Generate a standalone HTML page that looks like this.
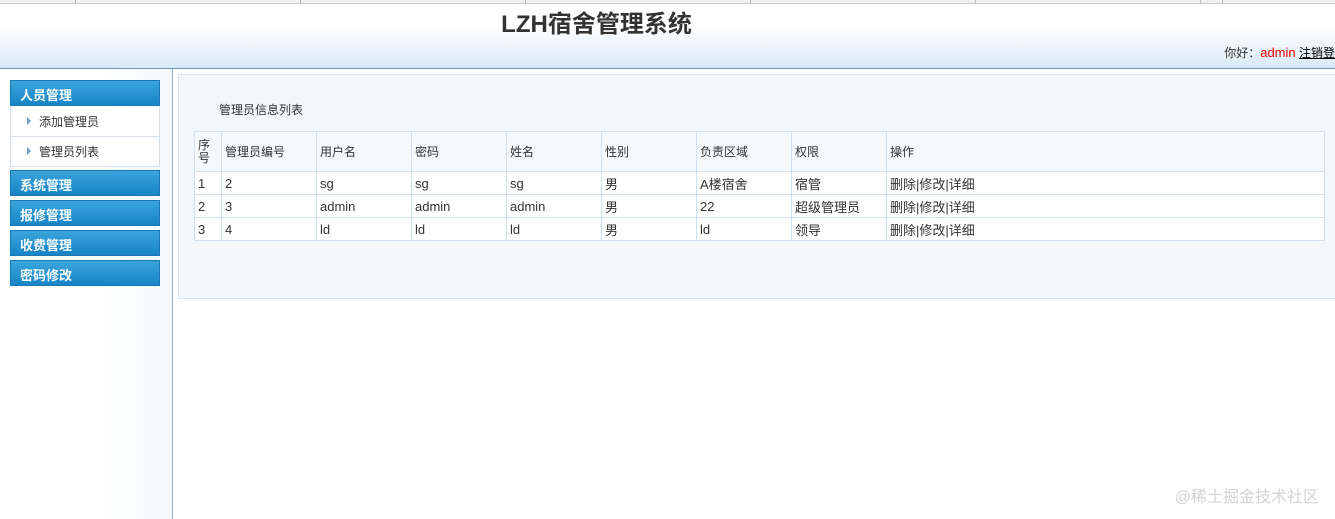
<!DOCTYPE html><html><head><meta charset="utf-8"><style>
*{margin:0;padding:0;box-sizing:border-box}
body{width:1335px;height:519px;overflow:hidden;background:#fff;font-family:"Liberation Sans","Noto Sans CJK SC",sans-serif;font-size:12px;color:#333;position:relative}
.tabs{position:absolute;top:0;left:0;width:1335px;height:4px;background:#f0f0f0;border-bottom:1px solid #ccc}
.tabs i{position:absolute;top:0;width:1px;height:4px;background:#bbb}
.head{position:absolute;top:4px;left:0;width:1335px;height:65px;background:linear-gradient(#fff 0%,#fff 35%,#d9eaf7 100%);border-bottom:1px solid #6d98b8}
.title{position:absolute;left:0;width:1193px;text-align:center;top:0px;font-size:24px;font-weight:bold;color:#333}
.hi{position:absolute;right:0;top:40px;font-size:12px;color:#333}
.hi span{color:#e00;font-size:13px}.hi u{color:#000}
.side{position:absolute;top:69px;left:0;width:173px;height:450px;border-right:1px solid #8fb5d3;background:linear-gradient(90deg,#fff 60%,#f3f8fd)}
.mh{position:absolute;left:10px;width:150px;height:26px;background:linear-gradient(#3aa5dc,#1784c6);border:1px solid #1a78b5;color:#fff;font-weight:bold;font-size:13px;padding:8px 0 0 9px;line-height:14px}
.mi{position:absolute;left:10px;width:150px;height:30px;border:1px solid #d4dfe8;border-top:none;background:#fff;padding:6px 0 0 28px;font-size:12px;color:#333}
.mi:before{content:"";position:absolute;left:16px;top:10px;border-left:4px solid #6aa0c8;border-top:4px solid transparent;border-bottom:4px solid transparent}
.panel{position:absolute;left:178px;top:74px;width:1160px;height:225px;background:#f2f7fc;border:1px solid #d8e6f2}
.cap{position:absolute;left:219px;top:101px;font-size:12px}
table{position:absolute;left:194px;top:131px;border-collapse:collapse;background:#fff;font-size:13px}
td{border:1px solid #cfe0f0;padding:0 3px;vertical-align:middle}
tr.h td{background:#f4f9fd;height:40px;font-size:12px}
tr.r td{height:23px}
</style></head><body>
<div class="tabs"><i style="left:75px"></i><i style="left:300px"></i><i style="left:525px"></i><i style="left:750px"></i><i style="left:975px"></i><i style="left:1200px"></i><i style="left:1222px"></i></div>
<div class="head"><div class="title">LZH宿舍管理系统</div><div class="hi">你好：<span>admin</span> <u>注销登</u></div></div>
<div class="side">
<div class="mh" style="top:11px">人员管理</div>
<div class="mi" style="top:38px">添加管理员</div>
<div class="mi" style="top:68px">管理员列表</div>
<div class="mh" style="top:101px">系统管理</div>
<div class="mh" style="top:131px">报修管理</div>
<div class="mh" style="top:161px">收费管理</div>
<div class="mh" style="top:191px">密码修改</div>
</div>
<div class="panel"></div>
<div class="cap">管理员信息列表</div>
<table>
<colgroup><col style="width:27px"><col style="width:95px"><col style="width:95px"><col style="width:95px"><col style="width:95px"><col style="width:95px"><col style="width:95px"><col style="width:95px"><col style="width:438px"></colgroup>
<tr class="h"><td style="line-height:13px">序<br>号</td><td>管理员编号</td><td>用户名</td><td>密码</td><td>姓名</td><td>性别</td><td>负责区域</td><td>权限</td><td>操作</td></tr>
<tr class="r"><td>1</td><td>2</td><td>sg</td><td>sg</td><td>sg</td><td>男</td><td>A楼宿舍</td><td>宿管</td><td>删除|修改|详细</td></tr>
<tr class="r"><td>2</td><td>3</td><td>admin</td><td>admin</td><td>admin</td><td>男</td><td>22</td><td>超级管理员</td><td>删除|修改|详细</td></tr>
<tr class="r"><td>3</td><td>4</td><td>ld</td><td>ld</td><td>ld</td><td>男</td><td>ld</td><td>领导</td><td>删除|修改|详细</td></tr>
</table>
<div style="position:absolute;right:16px;top:483px;font-size:16px;color:#d4d4d4">@稀土掘金技术社区</div>
</body></html>
